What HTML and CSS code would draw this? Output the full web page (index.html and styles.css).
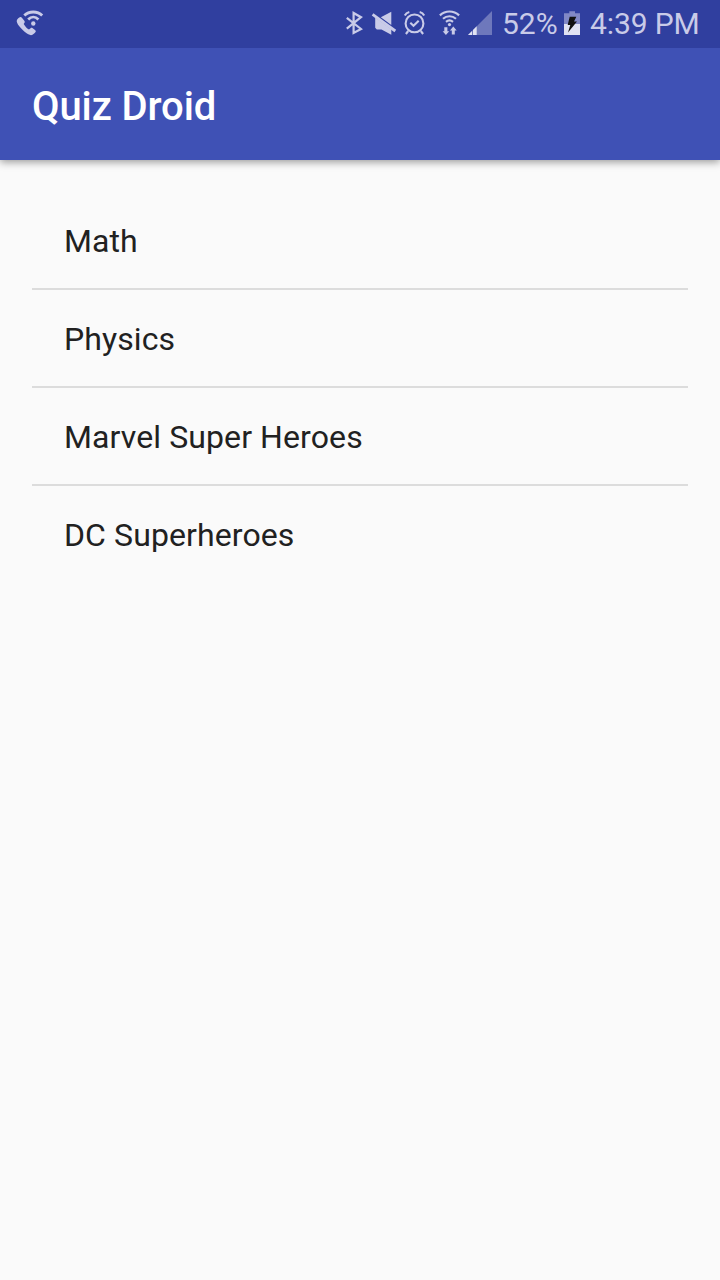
FILE: index.html
```html
<!DOCTYPE html>
<html lang="en">
<head>
<meta charset="utf-8">
<title>Quiz Droid</title>
<link rel="stylesheet" href="styles.css">
</head>
<body>
<div class="status-bar">
  <svg class="icon-call" width="28" height="28" viewBox="16 9 28 28">
    <path class="fill" d="M19.8 17.2C18 18 16.8 19.4 16.7 21.2C17 23.2 18.4 25.4 20.6 27.8C23.6 31.2 27.6 34.6 31 35.2C33 34.9 35 33.2 35.8 31.6C35.9 31 35.6 30.5 35 30.1L32.4 28.1C31.7 27.7 31.1 27.8 30.6 28.3L29 29.6C27.2 28.6 25.2 26.6 23.7 24L24.5 22.8C24.9 22.2 24.9 21.6 24.5 21L21.9 17.7C21.4 17.1 20.6 16.9 19.8 17.2Z"/>
    <path class="line" stroke-width="2.8" d="M24.3 15.5C29 10.8 37.5 10.8 42.2 15.5M28.2 19.4C31.2 16.4 35.4 16.4 38.4 19.4"/>
    <circle class="fill" cx="33.3" cy="23.5" r="2.2"/>
  </svg>
  <div class="indicators">
    <svg class="icon-bluetooth" width="20" height="26" viewBox="344 10 20 26">
      <path class="line" stroke-width="2.2" d="M346.8 17.8L361 29L353.6 33V13L361 17.2L346.8 28.6"/>
    </svg>
    <svg class="icon-mute" width="26" height="26" viewBox="371 10 26 26">
      <path class="fill" d="M391.3 11.8V25L380.8 17.2ZM375.2 17.6L391.3 29.2V34.8L381.5 29.4H376.8L375.2 27.8Z"/>
      <path class="line" stroke-width="2.8" d="M372.6 14.3L395.3 31"/>
    </svg>
    <svg class="icon-alarm" width="26" height="26" viewBox="402 10 26 26">
      <circle class="line" stroke-width="2.1" cx="414.5" cy="23.4" r="8.9"/>
      <path class="line" stroke-width="2.1" d="M410.3 22.8L413.5 25.8L418.7 20.7M404.8 15.4Q406.2 12.7 409.3 12M424.2 15.4Q422.8 12.7 419.7 12M408.2 31L405.9 34M420.8 31L423.1 34"/>
    </svg>
    <svg class="icon-wifi" width="24" height="26" viewBox="438 10 24 26">
      <path class="line" stroke-width="2.2" d="M439.9 15.4C445.3 10.2 453.7 10.2 459.1 15.4M443 18.8C446.8 15.4 452.2 15.4 456 18.8M446 21.9C448.2 20.1 450.8 20.1 453 21.9"/>
      <circle class="fill" cx="449.5" cy="24.6" r="1.6"/>
      <path class="fill" d="M444.3 27.2H447.4V31.2H449.2L445.9 35L442.6 31.2H444.3ZM451.8 34.5H454.8V30.4H456.7L453.3 26.4L449.9 30.4H451.8Z"/>
    </svg>
    <svg class="icon-signal" width="24" height="24" viewBox="468 11 24 24">
      <path class="dim" d="M468 35L492 11V35Z"/>
      <path class="bars" d="M468 35L472 31V35ZM473 30L476.7 26.3V35H473Z"/>
    </svg>
    <span class="battery-level">52%</span>
    <svg class="icon-battery" width="16" height="24" viewBox="564 11 16 24">
      <path class="battery-empty" d="M564 13.3H569.3V11.3H575V13.3H580V24H564Z"/>
      <path class="battery-full" d="M564 24H580V35H564Z"/>
      <path class="bolt" d="M569.7 16.8H576.3L574 21.5H577L568 32.5L570.3 25H567.7Z"/>
    </svg>
    <span class="clock">4:39 PM</span>
  </div>
</div>
<header class="app-bar"><h1 class="title">Quiz Droid</h1></header>
<ul class="topics">
  <li class="topic">Math</li>
  <li class="topic">Physics</li>
  <li class="topic">Marvel Super Heroes</li>
  <li class="topic">DC Superheroes</li>
</ul>
</body>
</html>
```
FILE: styles.css
```css
body {
  margin: 0;
  min-height: 1280px;
  background: #fafafa;
  font-family: Roboto, sans-serif;
}
.status-bar {
  position: relative;
  z-index: 1;
  box-sizing: border-box;
  display: flex;
  justify-content: space-between;
  align-items: center;
  height: 48px;
  padding: 0 20px 2px 16px;
  background: #303f9f;
  color: #c9cbe8;
}
svg { display: block; flex: none; }
.fill { fill: #c9cbe8; }
.line { fill: none; stroke: #c9cbe8; }
.dim { fill: #6e78bc; }
.bars { fill: #e0e2f3; }
.indicators { display: flex; align-items: center; }
.icon-mute { margin-left: 7px; }
.icon-alarm { margin-left: 5px; }
.icon-wifi { margin-left: 10px; }
.icon-signal { margin-left: 6px; }
.battery-empty { fill: #8188c6; }
.battery-full { fill: #e0e2f3; }
.bolt { fill: #111; }
.battery-level, .clock {
  padding-top: 2px;
  font-size: 30px;
  line-height: 44px;
  white-space: nowrap;
}
.battery-level { width: 62px; margin-left: 10px; }
.clock { width: 110px; margin-left: 10px; letter-spacing: -.1px; }
.app-bar {
  display: flex;
  align-items: center;
  height: 112px;
  padding: 0 32px;
  background: #3f51b5;
  box-shadow: 0 2px 8px rgba(0, 0, 0, .4);
}
.title {
  margin: 0;
  padding-top: 6px;
  color: #fff;
  font-size: 40px;
  font-weight: 500;
  line-height: 48px;
  letter-spacing: -.1px;
}
.topics {
  margin: 0;
  padding: 32px;
  list-style: none;
}
.topic {
  height: 96px;
  padding: 0 32px;
  color: #212121;
  font-size: 32px;
  line-height: 98px;
  letter-spacing: .1px;
}
.topic + .topic { border-top: 2px solid #dcdcdc; }
```
